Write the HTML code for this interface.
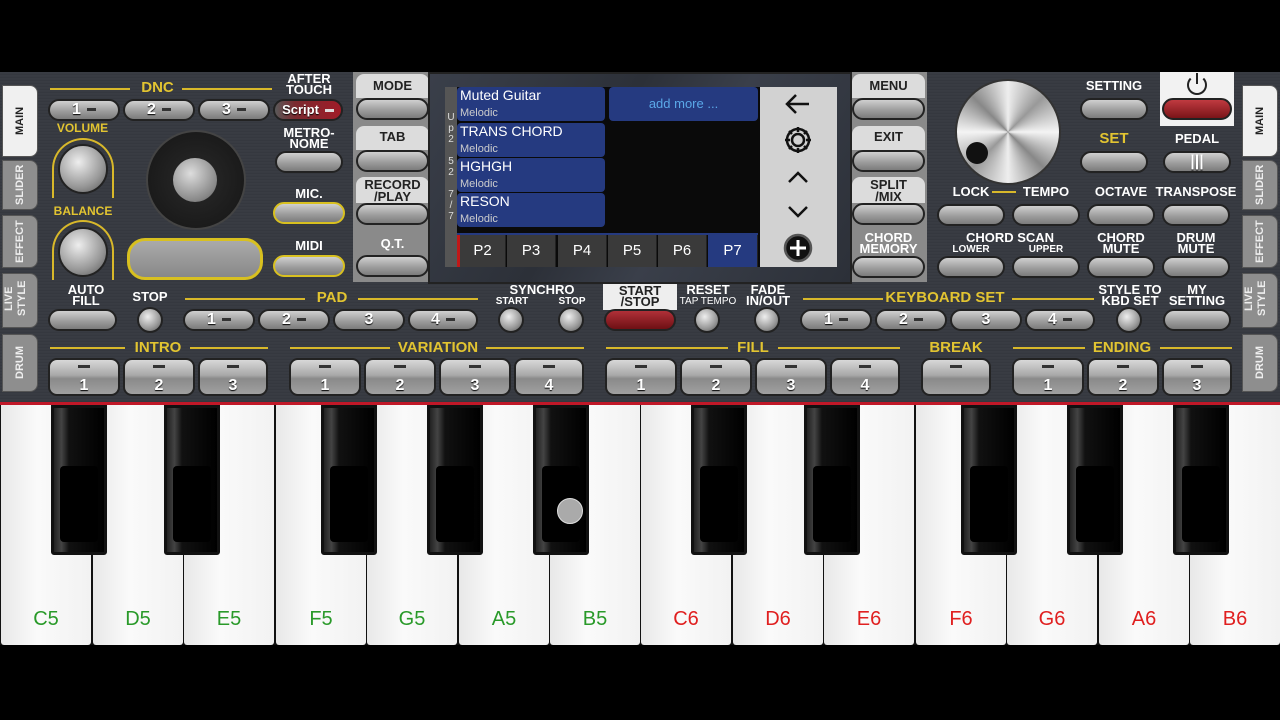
<!DOCTYPE html><html><head><style>
*{margin:0;padding:0;box-sizing:border-box}
body{width:1280px;height:720px;background:#000;position:relative;overflow:hidden;font-family:"Liberation Sans",sans-serif;font-weight:bold}
.a{position:absolute}
.panel{left:0;top:72px;width:1280px;height:331px;background:repeating-linear-gradient(0deg,#3b3e45 0,#33363d 2px,#3d4047 3px);}
.b{position:absolute;height:22px;border-radius:11px;background:linear-gradient(#d0d0d0,#9a9a9a 60%,#7c7c7c);border:2px solid #222;color:#fff;font-size:16px;text-align:center;line-height:18px;text-shadow:0 1px 1px #000}
.d{display:inline-block;width:9px;height:3px;background:#333;vertical-align:middle;margin-left:6px}
.t{position:absolute;background:linear-gradient(#d8d8d8,#a8a8a8 45%,#8a8a8a 55%,#a0a0a0);border:2px solid #222;border-radius:9px;height:38px;color:#fff;font-size:16px;text-align:center;padding-top:17px;text-shadow:0 1px 1px #000}
.t:before{content:"";position:absolute;left:50%;top:5px;width:12px;height:3px;margin-left:-6px;background:#333}
.l{position:absolute;color:#fff;font-size:12px;text-align:center;line-height:11px}
.g{position:absolute;color:#e2c431;font-size:15px;text-align:center;white-space:nowrap}
.k{position:absolute;border-radius:50%;background:radial-gradient(circle at 40% 35%,#eee,#999 60%,#555);border:2px solid #222}
.side{position:absolute;width:36px;background:#8e8e8e;border-radius:8px 0 0 8px;color:#eee;font-size:11px;writing-mode:vertical-rl;transform:rotate(180deg);text-align:center;line-height:34px;border:1px solid #555}
.sel{background:#f0f0f0;color:#222}
.ln{position:absolute;height:2px;background:#d8b82a}
.w{position:absolute;top:405px;width:90px;height:240px;background:linear-gradient(90deg,#e8e8e8,#fafafa 40%,#f2f2f2);border-radius:0 0 3px 3px}
.w span{position:absolute;bottom:14px;width:100%;text-align:center;font-size:20px;font-weight:normal}
.bk{position:absolute;top:405px;width:56px;height:150px;background:linear-gradient(90deg,#222,#444 15%,#111 30%,#000);border:3px solid #111;border-radius:0 0 3px 3px}
.bk:after{content:"";position:absolute;left:6px;right:6px;top:58px;bottom:10px;background:#000;border-radius:4px}
.it{position:absolute;left:457px;width:148px;height:34px;background:#253a80;border-radius:4px;color:#fff;font-size:14px;font-weight:normal;padding-left:3px;line-height:16px}
.it i{display:block;font-style:normal;font-size:11px;color:#ccc;line-height:20px}
.tab{position:absolute;top:235px;width:49px;height:32px;background:#3a3a3a;color:#fff;font-size:15px;font-weight:normal;text-align:center;line-height:32px;border-right:1px solid #222}
.lc{position:absolute;background:#dcdcdc;color:#222;font-size:13px;text-align:center;line-height:12px;border-radius:8px 8px 0 0}
</style></head><body>
<div class="a panel"></div>
<div class="side sel" style="left:2px;top:85px;height:72px">MAIN</div>
<div class="side" style="left:2px;top:160px;height:50px">SLIDER</div>
<div class="side" style="left:2px;top:215px;height:53px">EFFECT</div>
<div class="side" style="left:2px;top:273px;height:55px;line-height:13px;padding-top:4px">LIVE STYLE</div>
<div class="side" style="left:2px;top:334px;height:58px">DRUM</div>
<div class="side sel" style="left:1242px;top:85px;height:72px">MAIN</div>
<div class="side" style="left:1242px;top:160px;height:50px">SLIDER</div>
<div class="side" style="left:1242px;top:215px;height:53px">EFFECT</div>
<div class="side" style="left:1242px;top:273px;height:55px;line-height:13px;padding-top:4px">LIVE STYLE</div>
<div class="side" style="left:1242px;top:334px;height:58px">DRUM</div>
<div class="ln" style="left:50px;top:88px;width:80px"></div><div class="g" style="left:135px;top:79px;width:45px">DNC</div><div class="ln" style="left:182px;top:88px;width:90px"></div>
<div class="l" style="left:273px;top:73px;width:72px;font-size:13px">AFTER<br>TOUCH</div>
<div class="b" style="left:48px;top:99px;width:72px">1<span class="d"></span></div><div class="b" style="left:123px;top:99px;width:72px">2<span class="d"></span></div><div class="b" style="left:198px;top:99px;width:72px">3<span class="d"></span></div>
<div class="b" style="left:273px;top:99px;width:70px;background:linear-gradient(90deg,#5a5a5a,#7a2a30 30%,#a01c28);font-size:13px">Script<span class="d" style="background:#ddd"></span></div>
<div class="g" style="left:50px;top:121px;width:65px;font-size:12px">VOLUME</div>
<div class="a" style="left:52px;top:138px;width:62px;height:60px;border:2px solid #d8b82a;border-bottom:none;border-radius:31px 31px 0 0"></div>
<div class="k" style="left:58px;top:144px;width:50px;height:50px"></div>
<div class="g" style="left:48px;top:204px;width:70px;font-size:12px">BALANCE</div>
<div class="a" style="left:52px;top:220px;width:62px;height:60px;border:2px solid #d8b82a;border-bottom:none;border-radius:31px 31px 0 0"></div>
<div class="k" style="left:58px;top:227px;width:50px;height:50px"></div>
<div class="l" style="left:56px;top:284px;width:60px;font-size:13px">AUTO<br>FILL</div>
<div class="a" style="left:146px;top:130px;width:100px;height:100px;border-radius:50%;background:radial-gradient(#2a2a2a,#141414);border:2px solid #444"></div>
<div class="a" style="left:173px;top:158px;width:44px;height:44px;border-radius:50%;background:radial-gradient(circle at 40% 35%,#ddd,#888 70%,#555)"></div>
<div class="a" style="left:127px;top:238px;width:136px;height:42px;border:3px solid #d8c020;border-radius:18px;background:linear-gradient(#aaa,#888)"></div>
<div class="l" style="left:275px;top:127px;width:68px;font-size:13px">METRO-<br>NOME</div>
<div class="b" style="left:275px;top:151px;width:68px"></div>
<div class="l" style="left:275px;top:188px;width:68px;font-size:13px">MIC.</div>
<div class="b" style="left:273px;top:202px;width:72px;border-color:#d8c020"></div>
<div class="l" style="left:275px;top:240px;width:68px;font-size:13px">MIDI</div>
<div class="b" style="left:273px;top:255px;width:72px;border-color:#d8c020"></div>
<div class="a" style="left:353px;top:72px;width:76px;height:210px;background:#8a8a8a"></div>
<div class="lc" style="left:356px;top:74px;width:73px;height:24px;padding-top:6px">MODE</div><div class="b" style="left:356px;top:98px;width:73px"></div>
<div class="lc" style="left:356px;top:126px;width:73px;height:24px;padding-top:5px">TAB</div><div class="b" style="left:356px;top:150px;width:73px"></div>
<div class="lc" style="left:356px;top:177px;width:73px;height:26px;padding-top:2px">RECORD<br>/PLAY</div><div class="b" style="left:356px;top:203px;width:73px"></div>
<div class="l" style="left:356px;top:238px;width:73px;font-size:13px">Q.T.</div><div class="b" style="left:356px;top:255px;width:73px"></div>
<div class="a" style="left:428px;top:72px;width:424px;height:212px;background:linear-gradient(120deg,#3a3f4a,#2c3038 40%,#3a3f4a 60%,#2c3038);border:2px solid #222"></div>
<div class="a" style="left:445px;top:87px;width:392px;height:180px;background:#0a0a0a"></div>
<div class="a" style="left:445px;top:87px;width:12px;height:180px;background:#555;color:#ddd;font-size:10px;font-weight:normal;text-align:center;line-height:11px;padding-top:25px">U<br>p<br>2<br><br>5<br>2<br><br>7<br>/<br>7</div>
<div class="it" style="top:87px">Muted Guitar<i>Melodic</i></div>
<div class="it" style="top:123px">TRANS CHORD<i>Melodic</i></div>
<div class="it" style="top:158px">HGHGH<i>Melodic</i></div>
<div class="it" style="top:193px">RESON<i>Melodic</i></div>
<div class="a" style="left:609px;top:87px;width:149px;height:34px;background:#253a80;border-radius:4px;color:#5aa8e8;font-size:13px;font-weight:normal;text-align:center;line-height:34px">add more ...</div>
<div class="a" style="left:457px;top:233px;width:301px;height:2px;background:#253a80"></div>
<div class="tab" style="left:457px;border-left:3px solid #c01818">P2</div><div class="tab" style="left:507px">P3</div><div class="tab" style="left:558px">P4</div><div class="tab" style="left:608px">P5</div><div class="tab" style="left:658px">P6</div><div class="tab" style="left:708px;width:50px;background:#253a80">P7</div>
<div class="a" style="left:760px;top:87px;width:77px;height:180px;background:#d2d2d2"></div>
<svg class="a" style="left:777px;top:90px" width="44" height="176" viewBox="0 0 44 176" fill="none" stroke="#111" stroke-width="2.5">
<path d="M32 14H10M19 5l-9 9 9 9"/>
<circle cx="21" cy="50" r="6"/><path d="M21 37v5M21 58v5M8 50h5M29 50h5M12 41l3 3M27 56l3 3M12 59l3-3M27 44l3-3"/><circle cx="21" cy="50" r="11"/>
<path d="M12 92l9-9 9 9M12 117l9 9 9-9"/>
<circle cx="21" cy="158" r="13" fill="#111" stroke="#555"/><path d="M21 150v16M13 158h16" stroke="#fff" stroke-width="3"/>
</svg>
<div class="a" style="left:852px;top:72px;width:75px;height:210px;background:#8a8a8a"></div>
<div class="lc" style="left:852px;top:74px;width:73px;height:24px;padding-top:6px">MENU</div><div class="b" style="left:852px;top:98px;width:73px"></div>
<div class="lc" style="left:852px;top:126px;width:73px;height:24px;padding-top:5px">EXIT</div><div class="b" style="left:852px;top:150px;width:73px"></div>
<div class="lc" style="left:852px;top:177px;width:73px;height:26px;padding-top:2px">SPLIT<br>/MIX</div><div class="b" style="left:852px;top:203px;width:73px"></div>
<div class="l" style="left:852px;top:232px;width:73px;font-size:13px">CHORD<br>MEMORY</div><div class="b" style="left:852px;top:256px;width:73px"></div>
<div class="a" style="left:955px;top:79px;width:106px;height:106px;border-radius:50%;background:conic-gradient(#eee,#999,#f4f4f4,#888,#eee,#999,#f4f4f4,#888,#eee);border:2px solid #333"></div>
<div class="a" style="left:966px;top:142px;width:22px;height:22px;border-radius:50%;background:#111"></div>
<div class="l" style="left:1080px;top:80px;width:68px;font-size:13px">SETTING</div><div class="b" style="left:1080px;top:98px;width:68px"></div>
<div class="a" style="left:1160px;top:72px;width:74px;height:54px;background:#f2f2f2"></div>
<div class="a" style="left:1187px;top:75px;width:20px;height:20px;border:2px solid #222;border-radius:50%;border-top-color:transparent"></div><div class="a" style="left:1196px;top:73px;width:2px;height:11px;background:#222"></div>
<div class="b" style="left:1162px;top:98px;width:70px;background:linear-gradient(#c03a40,#7a1418)"></div>
<div class="g" style="left:1080px;top:130px;width:68px">SET</div><div class="b" style="left:1080px;top:151px;width:68px"></div>
<div class="l" style="left:1163px;top:133px;width:68px;font-size:13px">PEDAL</div><div class="b" style="left:1163px;top:151px;width:68px">|||</div>
<div class="l" style="left:937px;top:186px;width:68px;font-size:13px">LOCK</div><div class="ln" style="left:992px;top:191px;width:24px"></div><div class="l" style="left:1012px;top:186px;width:68px;font-size:13px">TEMPO</div>
<div class="l" style="left:1087px;top:186px;width:68px;font-size:13px">OCTAVE</div><div class="l" style="left:1155px;top:186px;width:82px;font-size:13px">TRANSPOSE</div>
<div class="b" style="left:937px;top:204px;width:68px"></div><div class="b" style="left:1012px;top:204px;width:68px"></div><div class="b" style="left:1087px;top:204px;width:68px"></div><div class="b" style="left:1162px;top:204px;width:68px"></div>
<div class="l" style="left:950px;top:232px;width:120px;font-size:13px">CHORD SCAN</div><div class="l" style="left:937px;top:244px;width:68px;font-size:10px">LOWER</div><div class="l" style="left:1012px;top:244px;width:68px;font-size:10px">UPPER</div>
<div class="l" style="left:1087px;top:232px;width:68px;font-size:13px">CHORD<br>MUTE</div><div class="l" style="left:1162px;top:232px;width:68px;font-size:13px">DRUM<br>MUTE</div>
<div class="b" style="left:937px;top:256px;width:68px"></div><div class="b" style="left:1012px;top:256px;width:68px"></div><div class="b" style="left:1087px;top:256px;width:68px"></div><div class="b" style="left:1162px;top:256px;width:68px"></div>
<div class="b" style="left:48px;top:309px;width:69px"></div>
<div class="l" style="left:125px;top:291px;width:50px;font-size:13px">STOP</div><div class="k" style="left:137px;top:307px;width:26px;height:26px"></div>
<div class="ln" style="left:185px;top:298px;width:120px"></div><div class="g" style="left:310px;top:289px;width:44px">PAD</div><div class="ln" style="left:358px;top:298px;width:120px"></div>
<div class="b" style="left:183px;top:309px;width:72px">1<span class="d"></span></div><div class="b" style="left:258px;top:309px;width:72px">2<span class="d"></span></div><div class="b" style="left:333px;top:309px;width:72px">3</div><div class="b" style="left:408px;top:309px;width:70px">4<span class="d"></span></div>
<div class="l" style="left:500px;top:284px;width:84px;font-size:13px">SYNCHRO</div><div class="l" style="left:490px;top:296px;width:44px;font-size:10px">START</div><div class="l" style="left:550px;top:296px;width:44px;font-size:10px">STOP</div>
<div class="k" style="left:498px;top:307px;width:26px;height:26px"></div><div class="k" style="left:558px;top:307px;width:26px;height:26px"></div>
<div class="a" style="left:603px;top:284px;width:74px;height:26px;background:#eee;color:#222;font-size:13px;text-align:center;line-height:11px;padding-top:1px">START<br>/STOP</div>
<div class="b" style="left:604px;top:309px;width:72px;background:linear-gradient(#b03038,#6e1014)"></div>
<div class="l" style="left:677px;top:284px;width:62px;font-size:13px">RESET</div><div class="l" style="left:672px;top:296px;width:72px;font-size:10px;font-weight:normal">TAP TEMPO</div>
<div class="l" style="left:740px;top:284px;width:56px;font-size:13px">FADE<br>IN/OUT</div>
<div class="k" style="left:694px;top:307px;width:26px;height:26px"></div><div class="k" style="left:754px;top:307px;width:26px;height:26px"></div>
<div class="ln" style="left:803px;top:298px;width:80px"></div><div class="g" style="left:883px;top:289px;width:124px">KEYBOARD SET</div><div class="ln" style="left:1012px;top:298px;width:82px"></div>
<div class="b" style="left:800px;top:309px;width:72px">1<span class="d"></span></div><div class="b" style="left:875px;top:309px;width:72px">2<span class="d"></span></div><div class="b" style="left:950px;top:309px;width:72px">3</div><div class="b" style="left:1025px;top:309px;width:70px">4<span class="d"></span></div>
<div class="k" style="left:1116px;top:307px;width:26px;height:26px"></div>
<div class="l" style="left:1094px;top:284px;width:72px;font-size:13px">STYLE TO<br>KBD SET</div><div class="l" style="left:1163px;top:284px;width:68px;font-size:13px">MY<br>SETTING</div>
<div class="b" style="left:1163px;top:309px;width:68px"></div>
<div class="g" style="left:120px;top:339px;width:76px">INTRO</div><div class="ln" style="left:50px;top:347px;width:75px"></div><div class="ln" style="left:190px;top:347px;width:78px"></div>
<div class="g" style="left:388px;top:339px;width:100px">VARIATION</div><div class="ln" style="left:290px;top:347px;width:100px"></div><div class="ln" style="left:486px;top:347px;width:98px"></div>
<div class="g" style="left:728px;top:339px;width:50px">FILL</div><div class="ln" style="left:606px;top:347px;width:122px"></div><div class="ln" style="left:778px;top:347px;width:122px"></div>
<div class="g" style="left:921px;top:339px;width:70px">BREAK</div>
<div class="g" style="left:1086px;top:339px;width:72px">ENDING</div><div class="ln" style="left:1013px;top:347px;width:72px"></div><div class="ln" style="left:1160px;top:347px;width:72px"></div>
<div class="t" style="left:48px;top:358px;width:72px">1</div><div class="t" style="left:123px;top:358px;width:72px">2</div><div class="t" style="left:198px;top:358px;width:70px">3</div>
<div class="t" style="left:289px;top:358px;width:72px">1</div><div class="t" style="left:364px;top:358px;width:72px">2</div><div class="t" style="left:439px;top:358px;width:72px">3</div><div class="t" style="left:514px;top:358px;width:70px">4</div>
<div class="t" style="left:605px;top:358px;width:72px">1</div><div class="t" style="left:680px;top:358px;width:72px">2</div><div class="t" style="left:755px;top:358px;width:72px">3</div><div class="t" style="left:830px;top:358px;width:70px">4</div>
<div class="t" style="left:921px;top:358px;width:70px"></div>
<div class="t" style="left:1012px;top:358px;width:72px">1</div><div class="t" style="left:1087px;top:358px;width:72px">2</div><div class="t" style="left:1162px;top:358px;width:70px">3</div>
<div class="a" style="left:0;top:402px;width:1280px;height:3px;background:#c01828"></div>
<div class="a" style="left:0;top:405px;width:1280px;height:240px;background:#111"></div>
<div class="w" style="left:1px"><span style="color:#2a9a2a">C5</span></div>
<div class="w" style="left:93px"><span style="color:#2a9a2a">D5</span></div>
<div class="w" style="left:184px"><span style="color:#2a9a2a">E5</span></div>
<div class="w" style="left:276px"><span style="color:#2a9a2a">F5</span></div>
<div class="w" style="left:367px"><span style="color:#2a9a2a">G5</span></div>
<div class="w" style="left:459px"><span style="color:#2a9a2a">A5</span></div>
<div class="w" style="left:550px"><span style="color:#2a9a2a">B5</span></div>
<div class="w" style="left:641px"><span style="color:#e02020">C6</span></div>
<div class="w" style="left:733px"><span style="color:#e02020">D6</span></div>
<div class="w" style="left:824px"><span style="color:#e02020">E6</span></div>
<div class="w" style="left:916px"><span style="color:#e02020">F6</span></div>
<div class="w" style="left:1007px"><span style="color:#e02020">G6</span></div>
<div class="w" style="left:1099px"><span style="color:#e02020">A6</span></div>
<div class="w" style="left:1190px"><span style="color:#e02020">B6</span></div>
<div class="bk" style="left:51px"></div><div class="bk" style="left:164px"></div><div class="bk" style="left:321px"></div><div class="bk" style="left:427px"></div><div class="bk" style="left:533px"></div>
<div class="bk" style="left:691px"></div><div class="bk" style="left:804px"></div><div class="bk" style="left:961px"></div><div class="bk" style="left:1067px"></div><div class="bk" style="left:1173px"></div>
<div class="a" style="left:557px;top:498px;width:26px;height:26px;border-radius:50%;background:#aaa;border:1px solid #ddd"></div>
</body></html>
